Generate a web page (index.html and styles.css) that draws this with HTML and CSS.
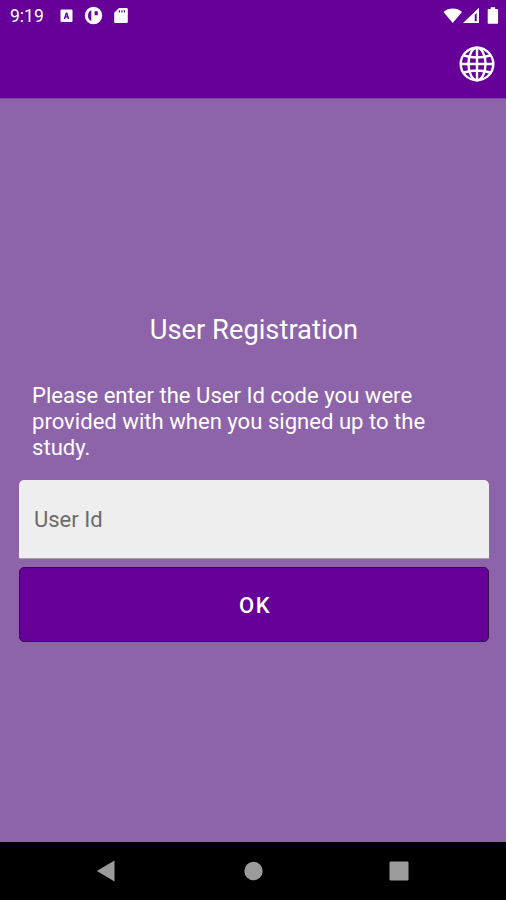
FILE: index.html
```html
<!DOCTYPE html>
<html lang="en">
<head>
<meta charset="utf-8">
<title>User Registration</title>
<link rel="stylesheet" href="styles.css">
</head>
<body>
<div class="screen">
  <header class="header">
    <div class="status">
      <span class="time">9:19</span>
      <svg class="notices" width="72" height="20" viewBox="0 0 72 20" fill="#fff">
        <path fill-rule="evenodd" d="M1.500 3.500h10a1 1 0 0 1 1 1V15a1 1 0 0 1-1 1h-10a1 1 0 0 1-1-1V4.500a1 1 0 0 1 1-1zM3.700 13h1.600l.4-1.400h1.700l.4 1.400h1.600L7.300 6.500H5.800zM6.100 10.200l.45-1.700.45 1.700z"/>
        <path fill-rule="evenodd" d="M33.500 .8a8.700 8.700 0 1 0 0 17.400 8.700 8.700 0 0 0 0-17.400zM31.300 4.200V15C27 14 27 5.200 31.300 4.200zM34.600 5.200h3.200v4h-3.200z"/>
        <path fill-rule="evenodd" d="M59 2h7.500a1.300 1.300 0 0 1 1.300 1.300v12.400a1.300 1.300 0 0 1-1.300 1.300h-11a1.300 1.300 0 0 1-1.300-1.300V6.800zM58.800 4.200v2.400h1.200V4.200zM61.300 4.200v2.400h1.200V4.200zM63.800 4.200v2.400h1.200V4.200z"/>
      </svg>
      <svg class="signals" width="56" height="20" viewBox="0 0 56 20" fill="#fff">
        <path d="M.5 5.900C5.500 1.300 14 1.300 19 5.900L9.700 17z"/>
        <path fill-rule="evenodd" d="M36 1.800v15.200H20zM31.700 8.700v6.600h2V7z"/>
        <path d="M45.700 3h2V1.200h4.400V3h2a1 1 0 0 1 1 1v12.700a1 1 0 0 1-1 1h-8.400a1 1 0 0 1-1-1V4a1 1 0 0 1 1-1z"/>
      </svg>
    </div>
    <div class="toolbar">
      <svg class="globe" width="38" height="38" viewBox="0 0 38 38" fill="none" stroke="#fff" stroke-width="2.400">
        <circle cx="19" cy="19" r="16.300"/>
        <ellipse cx="19" cy="19" rx="8.500" ry="16.300"/>
        <path d="M19 2.700v32.600M2.700 19h32.600M5.800 10.500Q19 14.500 32.200 10.500M5.800 27.500Q19 23.500 32.200 27.500"/>
      </svg>
    </div>
  </header>
  <main class="content">
    <h1 class="title">User Registration</h1>
    <p class="message">Please enter the User Id code you were provided with when you signed up to the study.</p>
    <input class="field" type="text" placeholder="User Id" aria-label="User Id">
    <button class="ok">OK</button>
  </main>
  <nav class="navbar">
    <svg width="20" height="24" viewBox="0 0 20 24" fill="#9b9b9b"><path d="M.8 12 18.500 1.500v21z"/></svg>
    <svg width="20" height="24" viewBox="0 0 20 24" fill="#9b9b9b"><circle cx="10.500" cy="12" r="9.200"/></svg>
    <svg width="20" height="24" viewBox="0 0 20 24" fill="#9b9b9b"><rect x=".5" y="2.500" width="19" height="19" rx="1.200"/></svg>
  </nav>
</div>
</body>
</html>
```
FILE: styles.css
```css
* { box-sizing: border-box; }
body {
  margin: 0;
  font-family: Roboto, "Liberation Sans", sans-serif;
  color: #fff;
}
svg { display: block; }
.screen {
  display: flex;
  flex-direction: column;
  height: 900px;
  background: #8d63aa;
}
.header {
  height: 99px;
  background: #660099;
  border-bottom: 1px solid #7d4ba2;
}
.status {
  display: flex;
  align-items: center;
  height: 30px;
  padding: 1px 7px 0 10px;
}
.time {
  width: 50px;
  font-size: 17.5px;
  line-height: 30px;
}
.signals { margin-left: auto; }
.toolbar {
  display: flex;
  justify-content: flex-end;
  padding: 15px 10px 0 0;
}
.content {
  flex: 1;
  padding: 213px 17px 0 19px;
}
.title {
  margin: 0;
  font-size: 27.3px;
  font-weight: 400;
  line-height: 36px;
  text-align: center;
}
.message {
  width: 420px;
  margin: 34px 0 20px 13px;
  font-size: 22.1px;
  line-height: 26px;
}
.field {
  display: block;
  width: 100%;
  height: 79px;
  padding: 0 15px;
  border: 0;
  border-bottom: 1px solid #a5a0a5;
  border-radius: 5px 5px 0 0;
  outline: 0;
  background: #eee;
  font: 22px Roboto, "Liberation Sans", sans-serif;
}
.field::placeholder { color: #6b6b6b; opacity: 1; }
.ok {
  display: block;
  width: 100%;
  height: 75px;
  margin-top: 8px;
  padding: 2px 0 0 2px;
  border: 1.5px solid #35104d;
  border-radius: 5px;
  background: #660099;
  color: #fff;
  font: 500 22px Roboto, "Liberation Sans", sans-serif;
  letter-spacing: 1.5px;
}
.navbar {
  display: flex;
  justify-content: space-between;
  height: 58px;
  padding: 17px 97px 0 96px;
  background: #000;
}
```
